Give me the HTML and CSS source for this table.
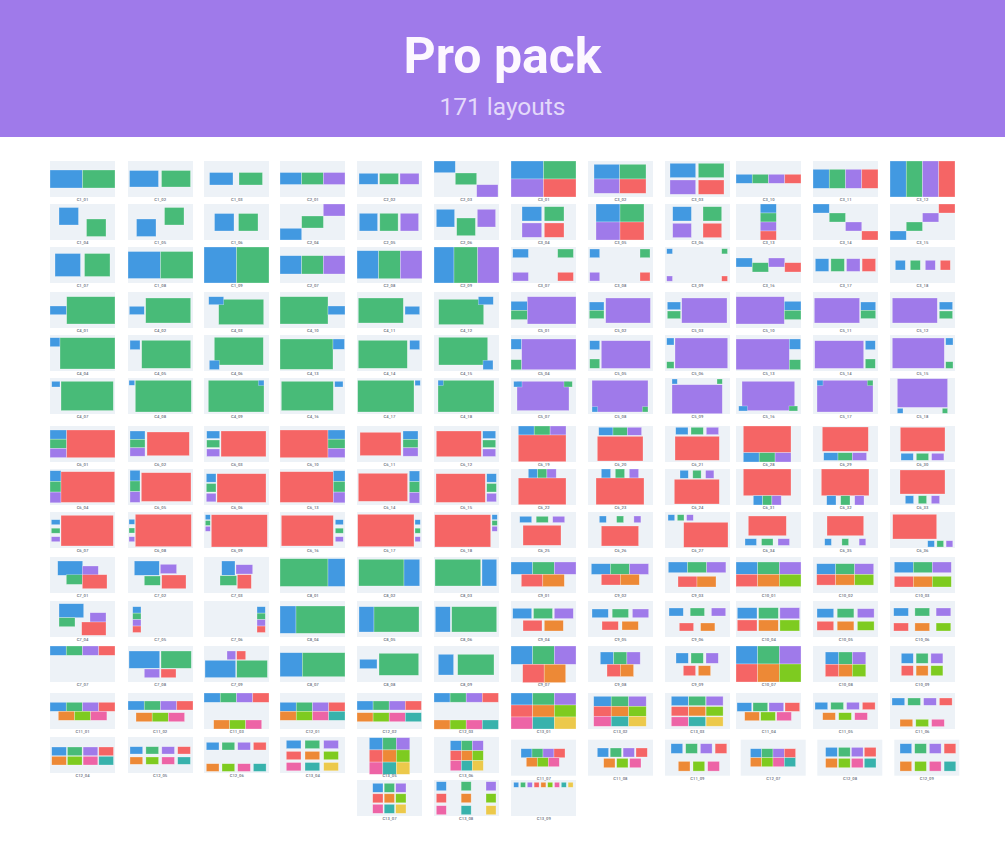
FILE: index.html
```html
<!DOCTYPE html>
<html lang="en">
<head>
<meta charset="utf-8">
<title>Pro pack</title>
<link rel="stylesheet" href="styles.css">
</head>
<body>
<header class="hero">
  <h1 class="hero-title">Pro pack</h1>
  <p class="hero-sub">171 layouts</p>
</header>
<main class="grid" id="grid"></main>
<script src="script.js"></script>
</body>
</html>
```

FILE: styles.css
```css
* { box-sizing: border-box; }
html, body { margin: 0; padding: 0; background: #ffffff; }
body { font-family: Roboto, "Liberation Sans", Arial, sans-serif; width: 1005px; min-height: 851px; }

.hero {
  height: 137px;
  background: #9f7aea;
  display: flex;
  flex-direction: column;
  align-items: center;
  padding-top: 30px;
}
.hero-title {
  margin: 0;
  font-size: 50px;
  line-height: 52px;
  font-weight: 700;
  color: #fdf8ff;
}
.hero-sub {
  margin: 10.5px 0 0;
  font-size: 24.5px;
  line-height: 28px;
  font-weight: 400;
  color: #e4d9fa;
}

.grid {
  display: grid;
  grid-template-columns: 77.7px 76.6px 76px 76.7px 76.7px 77.6px 76.7px 77px 71.3px 77px 76.7px 65px;
  grid-template-rows: 43px 43.3px 44.4px 43.3px 43.3px 47.7px 43.3px 42.4px 45px 44.3px 45px 47.3px 43.4px 43.6px 40px;
  padding: 24px 0 0 50px;
}

.item {
  width: 65px;
  display: flex;
  flex-direction: column;
}
.item.c5 { grid-column-start: 5; }

.thumb { display: block; overflow: visible; }
.thumb .bg { fill: #edf2f7; }
.blk { stroke: rgba(255, 255, 255, 0.45); stroke-width: 0.6px; }
.c-b { fill: #4299e1; }
.c-g { fill: #48bb78; }
.c-p { fill: #9f7aea; }
.c-r { fill: #f56565; }
.c-o { fill: #ed8936; }
.c-l { fill: #7ecb20; }
.c-k { fill: #ed64a6; }
.c-t { fill: #38b2ac; }
.c-y { fill: #ecc94b; }

.label {
  font-size: 4.2px;
  line-height: 5px;
  font-weight: 500;
  color: #6b7280;
  text-align: center;
  white-space: nowrap;
}
```

FILE: script.js
```js
(function () {
  function B(c, x, y, w, h) { return [[c, x, y, w, h]]; }
  function R(cs, x, y, w, h, g) { return cs.split('').map(function (c, i) { return [c, x + i * (w + g), y, w, h]; }); }
  function C(cs, x, y, w, h, g) { return cs.split('').map(function (c, i) { return [c, x, y + i * (h + g), w, h]; }); }
  function G(cs, n, x, y, w, h, gx, gy) { return cs.split('').map(function (c, i) { return [c, x + (i % n) * (w + gx), y + Math.floor(i / n) * (h + gy), w, h]; }); }

  var D = [
    // row 1
    ['C1_01', B('b',0,9,32.5,18), B('g',32.5,9,32.5,18)],
    ['C1_02', R('bg',1.5,9.5,29,16.5,3)],
    ['C1_03', R('bg',5.5,11.5,23.5,12.5,6)],
    ['C2_01', R('bgp',0,11.5,21.67,12,0)],
    ['C2_02', R('bgp',2,12.3,19,11,1.5)],
    ['C2_03', B('b',0,0,21.3,11.7), B('g',21.3,12,21.4,11.7), B('p',42.7,23.7,21.3,12.3)],
    ['C3_01', G('bgpr',2,0,0,32.5,18,0,0)],
    ['C3_02', B('b',6,3.3,25.7,14.7), B('g',31.7,3.3,26.3,14.7), B('p',6,18,25.7,14.3), B('r',31.7,18,26.3,14.3)],
    ['C3_03', G('bgpr',2,5,2.3,25.7,14.3,2.6,2.4)],
    ['C3_10', R('bgpr',0,13.3,16.25,9,0)],
    ['C3_11', R('bgpr',0,8.3,16.25,19,0)],
    ['C3_12', R('bgpr',0,0,16.25,36,0)],
    // row 2
    ['C1_04', B('b',9,3.5,19.5,17.5), B('g',36.5,15,19.5,17.5)],
    ['C1_05', B('b',8.5,15,19.5,17.5), B('g',36.5,3.5,19.5,17.5)],
    ['C1_06', R('bg',10.5,9.5,19.5,17.5,4.5)],
    ['C2_04', B('b',0,24.3,21.7,11.7), B('g',21.7,12,21.7,12), B('p',43.3,0,21.7,12)],
    ['C2_05', R('bgp',2.3,9.3,18.3,17.7,2.2)],
    ['C2_06', B('b',2.3,5.3,18.3,17.7), B('g',22.7,14,18.7,17.7), B('p',43.3,5.3,18.3,17.7)],
    ['C3_04', G('bgpr',2,11,2.7,19.7,14.3,2.6,2)],
    ['C3_05', G('bgpr',2,8,0,24,18,0,0)],
    ['C3_06', G('bgpr',2,7.7,2.7,18.7,14.3,11.6,2.3)],
    ['C3_13', C('bgpr',24.3,0,16,9,0)],
    ['C3_14', B('b',0,0,16.25,9), B('g',16.25,9,16.25,9), B('p',32.5,18,16.25,9), B('r',48.75,27,16.25,9)],
    ['C3_15', B('b',0,27,16.25,9), B('g',16.25,18,16.25,9), B('p',32.5,9,16.25,9), B('r',48.75,0,16.25,9)],
    // row 3
    ['C1_07', R('bg',5,6.5,25.5,23,4)],
    ['C1_08', R('bg',0,4.5,32.5,27,0)],
    ['C1_09', R('bg',0,0,32.5,36,0)],
    ['C2_07', R('bgp',0,8.7,21.67,18.3,0)],
    ['C2_08', R('bgp',0,3.7,21.67,28,0)],
    ['C2_09', B('b',0,0,20,36), B('g',20,0,23.7,36), B('p',43.7,0,21.3,36)],
    ['C3_07', G('bgpr',2,1.7,2,15.7,8.7,29.3,14.6)],
    ['C3_08', G('bgpr',2,1.7,2,10,8.7,40.3,14.6)],
    ['C3_09', G('bgpr',2,1.7,1.7,5.8,5.2,49.2,22.1)],
    ['C3_16', B('b',0,11,16.25,9), B('g',16.25,15.7,16.25,9.3), B('p',32.5,11,16.25,9), B('r',48.75,15.7,16.25,9.3)],
    ['C3_17', R('bgpr',2.3,11.7,13.5,12.7,2.1)],
    ['C3_18', R('bgpr',5.3,13.3,10,9.7,5)],
    // row 4
    ['C4_01', B('b',0,14,16.7,8.7), B('g',16.7,4.7,48.3,27.3)],
    ['C4_02', B('b',1.3,14.3,15,8.3), B('g',17.7,6,45,25)],
    ['C4_03', B('g',14.7,7.3,45,25.3), B('b',4.7,4.7,15,8)],
    ['C4_10', B('g',0,4.7,48,27.3), B('b',48,14,17,8.7)],
    ['C4_11', B('g',1.3,6,45,25), B('b',48,14.3,14.7,8.3)],
    ['C4_12', B('g',4.7,7.3,45,25.3), B('b',44.3,4.7,15,8)],
    ['C5_01', B('b',0,9.3,16.3,9), B('g',0,18.3,16.3,9.3), B('p',16.3,4.7,48.7,27.3)],
    ['C5_02', B('b',1.3,10,14.7,8.3), B('g',1.3,18.3,14.7,8.3), B('p',17.7,6,44.7,25)],
    ['C5_03', B('b',2.3,10,13.3,7.7), B('g',2.3,19,13.3,7.7), B('p',16.7,6,45.3,25)],
    ['C5_10', B('p',0,4.7,48.3,27.3), B('b',48.3,9.3,16.7,9), B('g',48.3,18.3,16.7,9.3)],
    ['C5_11', B('p',1.3,6,45.3,25), B('b',47.7,10,15,8.3), B('g',47.7,18.3,15,8.3)],
    ['C5_12', B('p',2.3,6,45,25), B('b',49.3,10,13.3,7.7), B('g',49.3,19,13.3,7.7)],
    // row 5
    ['C4_04', B('b',0,2.7,10,9), B('g',10,2.7,55,31.3)],
    ['C4_05', B('b',2,5.3,10,9.3), B('g',13.7,5.3,49,28)],
    ['C4_06', B('g',10.3,2.3,49,27.7), B('b',5.3,25.3,10,9.3)],
    ['C4_13', B('g',0,4,53,30.3), B('b',53,4,11.5,10.3)],
    ['C4_14', B('g',1.3,5.3,49,28), B('b',52.7,5.3,10,9.3)],
    ['C4_15', B('g',4.7,2.3,49,27.7), B('b',49,25.3,10,9.3)],
    ['C5_04', B('b',0,4,10.7,10.3), B('g',0,24.7,10.7,10), B('p',10.7,4,54.3,30.7)],
    ['C5_05', B('b',1.7,5.7,10,9), B('g',1.7,24,10,9.3), B('p',13.3,5.7,49,27.7)],
    ['C5_06', B('b',1.7,3,7.3,7), B('g',1.7,26.7,7.3,6.7), B('p',10,3,52.7,30.3)],
    ['C5_13', B('p',0,4,53.3,30.7), B('b',53.3,4,11.3,10.3), B('g',53.3,24.7,11.3,10)],
    ['C5_14', B('p',1.7,5.7,49,27.7), B('b',52.3,5.7,10,9), B('g',52.3,24,10,9.3)],
    ['C5_15', B('p',2.3,3,52,30.3), B('b',55.7,3,7.3,7), B('g',55.7,26.7,7.3,6.7)],
    // row 6
    ['C4_07', B('b',1.7,3.3,8.3,5.7), B('g',11,3.3,52.3,29.3)],
    ['C4_08', B('g',7.3,2.3,56,31.7), B('b',1,2.3,5.7,5)],
    ['C4_09', B('g',4.3,2.3,55.7,31.7), B('b',54.3,2.3,5.7,5.3)],
    ['C4_16', B('g',1.3,3.3,52,29.3), B('b',54.7,3.3,8.3,5.7)],
    ['C4_17', B('g',0.7,2.3,56.3,31.7), B('b',58,2.3,5.3,5.3)],
    ['C4_18', B('g',4,2.3,56,31.7), B('b',4,2.3,5.3,5.3)],
    ['C5_07', B('p',6,3.3,52,29.3), B('b',2.7,3.3,8.3,5.7), B('g',53,3.3,8.3,5.7)],
    ['C5_08', B('p',4,2.3,56,31.7), B('b',4,28.7,5.7,5.3), B('g',54.3,28.7,5.7,5.3)],
    ['C5_09', B('p',7,6.7,50.3,29), B('b',7,1,5.3,5), B('g',52,1,5.3,5)],
    ['C5_16', B('p',6,3.3,52.7,29.3), B('b',2.7,28,8.7,5), B('g',53,28,8.7,5)],
    ['C5_17', B('p',4,2.3,56,31.7), B('b',4,2.3,6,5.3), B('g',54.3,2.3,5.7,5.3)],
    ['C5_18', B('p',7.3,0.7,50.3,28.7), B('b',7.3,30.3,5.7,5), B('g',52.3,30.3,5.3,5)],
    // row 7
    ['C6_01', C('bgp',0,4,16.7,9.2,0), B('r',16.7,4,48.3,27.7)],
    ['C6_02', C('bgp',2,5,15,8.4,0), B('r',19,6,42.3,23.7)],
    ['C6_03', C('bgp',2.7,5,13,7.5,1.5), B('r',17,5,45,25.7)],
    ['C6_10', B('r',0,4,48,27.7), C('bgp',48,4,17,9.2,0)],
    ['C6_11', B('r',3,6.3,41,23.3), C('bgp',46,5,15,8.4,0)],
    ['C6_12', B('r',2.3,5,45,25.7), C('bgp',48.7,5,13,7.5,1.5)],
    ['C6_19', R('bgp',7.3,0,15.9,9,0), B('r',7.3,9,47.7,26.7)],
    ['C6_20', R('bgp',10.7,1.3,14.3,8,0), B('r',9.3,10.3,45.7,24.7)],
    ['C6_21', R('bgp',10.7,1.3,12.3,7.3,3), B('r',10,10.3,44.3,24)],
    ['C6_28', B('r',7.3,0,47.7,26.7), R('bgp',7.3,26.7,15.9,9.3,0)],
    ['C6_29', B('r',9.3,1,46,24.3), R('bgp',10.7,26.7,14.3,7.7,0)],
    ['C6_30', B('r',10.3,1.3,44.7,24), R('bgp',11,27.3,12.3,7,3)],
    // row 8
    ['C6_04', C('bgp',0,1.7,11,10.7,0), B('r',11,2.7,53.7,30.7)],
    ['C6_05', C('bgp',2,1.3,10,10.7,0), B('r',13.3,3.7,49.7,28.7)],
    ['C6_06', C('bgp',2.3,4.7,9.7,8.5,1.3), B('r',13,4.7,49,28.7)],
    ['C6_13', B('r',0,2.7,53.3,30.7), C('bgp',53.3,1.7,11.7,10.7,0)],
    ['C6_14', B('r',1.3,4.3,49.3,28), C('bgp',52.3,2,10.3,10.7,0)],
    ['C6_15', B('r',2,4.7,49.3,28.7), C('bgp',52.7,4.7,9.7,8.5,1.3)],
    ['C6_22', R('bgp',17.3,0,9.3,9,0), B('r',7.3,9,47.7,26.7)],
    ['C6_23', R('bgp',13.3,0,9.3,9,4.7), B('r',8,9,48,26.7)],
    ['C6_24', R('bgp',15,1.3,8.3,8,4.5), B('r',9.3,10.3,45,24.7)],
    ['C6_31', B('r',7.3,0,47.7,26.7), R('bgp',17.3,26.7,9.3,9.3,0)],
    ['C6_32', B('r',8.3,0,47.7,26.7), R('bgp',13.7,26.7,9.3,9.3,4.7)],
    ['C6_33', B('r',10,1,45,24), R('bgp',15.3,26.7,8.3,8,4.7)],
    // row 9
    ['C6_07', C('bgp',1.3,7.7,8.7,5,3.5), B('r',11,3.3,52.3,30.7)],
    ['C6_08', C('bgp',1,7.3,5.7,5,3.7), B('r',7.3,2.3,56,32.3)],
    ['C6_09', C('bgp',1.3,2.7,5,5,0.8), B('r',7.3,2.7,56,32.3)],
    ['C6_16', B('r',1.3,3.3,52,30.7), C('bgp',55.3,7.7,8,5,3.5)],
    ['C6_17', B('r',0.7,2.3,56.3,32.3), C('bgp',58,7.7,5.3,5,3.5)],
    ['C6_18', B('r',0.7,2.7,56,32.3), C('bgp',58,2.7,5.3,5,0.8)],
    ['C6_25', R('bgp',8.7,4.3,12,6.3,4.5), B('r',12,13.3,38,20)],
    ['C6_26', R('bgp',11.3,4,7,6.7,10.3), B('r',13.3,14,37.3,20)],
    ['C6_27', R('bgp',3,2.7,6.7,6,2.6), B('r',18.7,10.3,44.3,25)],
    ['C6_34', B('r',12.3,4,38,19.7), R('bgp',9,26.7,11.5,6.7,5)],
    ['C6_35', B('r',14,4,36.7,19.7), R('bgp',11.7,26.7,6.7,6.7,10.5)],
    ['C6_36', B('r',2.7,2.3,44,24.7), R('bgp',37.7,28.7,6.7,6.3,2.5)],
    // row 10
    ['C7_01', B('b',7.7,4,25,14.3), B('p',32.3,9,16,11), B('g',16.3,17.7,16,9.7), B('r',32.3,17.7,24.7,14)],
    ['C7_02', B('b',6.3,4,25,14.3), B('p',32.3,7.3,16.3,9.3), B('g',16.3,19,16,9.3), B('r',33.7,18,24.3,13.7)],
    ['C7_03', B('b',17.7,4,13.3,14.3), B('p',32,7.7,16.7,9.3), B('g',16,18.7,16.7,9.7), B('r',33.3,17.7,14,14)],
    ['C8_01', B('g',0,1.7,48,27.7), B('b',48,1.7,17,27.7)],
    ['C8_02', B('g',1.7,2.3,45.3,26.7), B('b',47,2.3,15.7,26.7)],
    ['C8_03', B('g',1,2.3,45.7,26.7), B('b',48,2.3,14.7,26.7)],
    ['C9_01', R('bgp',0,5,21.67,12.3,0), R('ro',10.3,17.3,21.5,12.3,0)],
    ['C9_02', R('bgp',3.3,6.7,19.1,10.7,0), R('ro',13.3,17.3,19,10.7,0)],
    ['C9_03', R('bgp',3.3,5,19.2,10.7,0), R('ro',13,19.3,19,10.7,0)],
    ['C10_01', G('bgprol',3,0,5,21.67,12.3,0,0)],
    ['C10_02', G('bgprol',3,3.7,6.7,19,10.7,0,0)],
    ['C10_03', G('bgprol',3,4.3,5,19,10.7,0,3.6)],
    // row 11
    ['C7_04', B('b',9,2.7,24.7,14), B('g',9,16.7,16,9), B('p',40,11.7,16,9.3), B('r',31.7,21,24.3,13.3)],
    ['C7_05', C('bgpr',4.7,5.7,8.3,6.45,0)],
    ['C7_06', C('bgpr',53,5.7,8.3,6.45,0)],
    ['C8_04', B('b',0,5,16,27.3), B('g',16,5,49,27.3)],
    ['C8_05', B('b',2,5.7,15,25.3), B('g',17,5.7,45,25.3)],
    ['C8_06', B('b',1.3,5.7,15,25.3), B('g',17.7,5.7,45,25.3)],
    ['C9_04', R('bgp',1.7,7.3,19,10.3,1.8), R('ro',12,19.3,19,10.7,2.3)],
    ['C9_05', R('bgp',4,8,16.3,8.7,3.9), R('ro',14,20.3,16.3,8.7,3.7)],
    ['C9_06', R('bgp',4,7,14.3,8,6.9), R('ro',14.3,22,14.3,8,7)],
    ['C10_04', G('bgprol',3,1.3,6.7,19.7,11,1.6,1.3)],
    ['C10_05', G('bgprol',3,4,7.7,16.7,9,3.5,3.6)],
    ['C10_06', G('bgprol',3,3.7,7,14.7,8,6.5,7)],
    // row 12
    ['C7_07', R('bgpr',0,0,16.25,9.3,0)],
    ['C7_08', B('b',1,5,30.7,17.3), B('g',33,5,30.3,17.3), B('p',16.3,23,15.3,8.7), B('r',33,23,15,8.7)],
    ['C7_09', B('p',23,5,8.7,8.7), B('r',32.7,5,9,8.7), B('b',1,14.3,30.7,17.3), B('g',32.7,14.3,30.7,17.3)],
    ['C8_07', B('b',0,6.7,22.3,24), B('g',22.3,6.7,42.7,24)],
    ['C8_08', B('b',2.7,13.3,17.3,9.3), B('g',22,7.3,39.7,22)],
    ['C8_09', B('b',4.3,8.3,15.3,20.7), B('g',23.7,8.3,36.3,20.7)],
    ['C9_07', R('bgp',0,0,21.67,18.3,0), R('ro',11.7,18.3,21.5,18.3,0)],
    ['C9_08', R('bgp',12.3,6,13.3,12.3,0), R('ro',19,18.3,13.3,12.3,0)],
    ['C9_09', R('bgp',11,7,12.3,10.3,2.7), R('ro',18.3,19.7,12.3,10,2.7)],
    ['C10_07', G('bgprol',3,0,0,21.67,18,0,0)],
    ['C10_08', G('bgprol',3,12.3,6,13.5,12.3,0,0)],
    ['C10_09', G('bgprol',3,11.3,7.3,12,10,2.8,2.4)],
    // row 13
    ['C11_01', R('bgpr',0,9.3,16.25,9,0), R('olk',8.3,18.3,16.2,9,0)],
    ['C11_02', R('bgpr',0,8,16.25,9,0), R('olk',8,19.7,16.2,9,0)],
    ['C11_03', R('bgpr',0,0,16.25,9.3,0), R('olk',9.7,27,16,9,0)],
    ['C12_01', G('bgprolkt',4,0,9.3,16.25,9,0,0)],
    ['C12_02', G('bgprolkt',4,0,8,16.1,9,0,2.7)],
    ['C12_03', G('bgprolkt',4,0,0,16.1,9.2,0,17.8)],
    ['C13_01', G('bgprolkty',3,0,0,21.67,12,0,0)],
    ['C13_02', G('bgprolkty',3,5.7,3.3,17.5,10,0,0)],
    ['C13_03', G('bgprolkty',3,6.3,3.3,17,9.3,0.4,1)],
    ['C11_04', R('bgpr',1,9.7,14.7,8.7,1.3), R('olk',8.7,19,14.7,8.7,1.3)],
    ['C11_05', R('bgpr',2,9.3,12.7,7.3,3.1), R('olk',9.7,19.7,12.7,7.3,3.3)],
    ['C11_06', R('bgpr',2,5,12.7,7.3,3.1), R('olk',10,26.3,12.7,7.3,3.1)],
    // row 14
    ['C12_04', G('bgprolkt',4,1.7,10,14.7,8.7,1,0.6)],
    ['C12_05', G('bgprolkt',4,2,9.7,12.7,7.3,3.2,3)],
    ['C12_06', G('bgprolkt',4,2.3,5.3,12.7,7.7,3,13.7)],
    ['C13_04', G('bgprolkty',3,6.3,3.3,14.7,8.3,4,2.8)],
    ['C13_05', G('bgprolkty',3,12.3,0.7,13.5,12.2,0,0)],
    ['C13_06', G('bgprolkty',3,16.3,3.7,11,10,0,0)],
    ['C11_07', R('bgpr',10,9,11,9,0), R('olk',15.3,18,11,9,0), {dx:0, dy:2.7}],
    ['C11_08', R('bgpr',9.3,8.3,11.3,9,1.6), R('olk',15.7,18.7,11.3,9.3,1.7), {dx:0, dy:2.7}],
    ['C11_09', R('bgpr',6,4,11.7,9.7,3), R('olk',13.3,21.7,11.7,9.7,3), {dx:0, dy:2.7}],
    ['C12_07', G('bgprolkt',4,9.7,9,11.3,9,0,0), {dx:4.7, dy:2.7}],
    ['C12_08', G('bgprolkt',4,8.3,7.7,11.7,9.3,1.2,1.7), {dx:4.3, dy:2.7}],
    ['C12_09', G('bgprolkt',4,5.7,4,11.7,9.7,3,8), {dx:4.3, dy:2.7}],
    // row 15
    ['C13_07', G('bgprolkty',3,15.7,3.3,10.3,9,1.2,1.5), {start:5}],
    ['C13_08', G('bgprolkty',3,2.3,1.7,10,9,14.85,3)],
    ['C13_09', R('bgprolkty',2.7,2.3,5,5,1.8)]
  ];

  var NS = 'http://www.w3.org/2000/svg';
  var grid = document.getElementById('grid');

  D.forEach(function (entry) {
    var label = entry[0];
    var rects = [];
    var opt = {};
    for (var i = 1; i < entry.length; i++) {
      if (Array.isArray(entry[i])) { rects = rects.concat(entry[i]); }
      else { opt = entry[i]; }
    }
    var item = document.createElement('div');
    item.className = 'item' + (opt.start === 5 ? ' c5' : '');
    if (opt.dx || opt.dy) {
      item.style.transform = 'translate(' + (opt.dx || 0) + 'px,' + (opt.dy || 0) + 'px)';
    }
    var svg = document.createElementNS(NS, 'svg');
    svg.setAttribute('class', 'thumb');
    svg.setAttribute('width', '65');
    svg.setAttribute('height', '36');
    svg.setAttribute('viewBox', '0 0 65 36');
    var bg = document.createElementNS(NS, 'rect');
    bg.setAttribute('class', 'bg');
    bg.setAttribute('width', '65');
    bg.setAttribute('height', '36');
    svg.appendChild(bg);
    rects.forEach(function (r) {
      var el = document.createElementNS(NS, 'rect');
      el.setAttribute('class', 'blk c-' + r[0]);
      el.setAttribute('x', r[1].toFixed(2));
      el.setAttribute('y', r[2].toFixed(2));
      el.setAttribute('width', r[3].toFixed(2));
      el.setAttribute('height', r[4].toFixed(2));
      svg.appendChild(el);
    });
    var lab = document.createElement('div');
    lab.className = 'label';
    lab.textContent = label;
    item.appendChild(svg);
    item.appendChild(lab);
    grid.appendChild(item);
  });
})();
```
